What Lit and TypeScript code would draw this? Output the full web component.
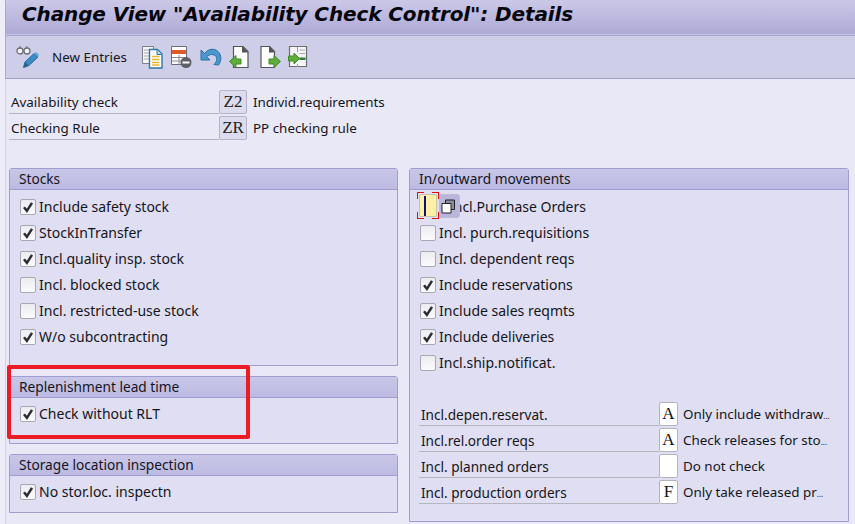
import { LitElement, html, css, svg } from "lit";
import { customElement } from "lit/decorators.js";

const check = (label: string, on: boolean, cls = "") => html`
  <div class="row">
    <span class="cb">${on ? html`<svg width="12" height="12" viewBox="0 0 12 12"><path d="M2 6.2 L4.900 9.800 L10 1.800" fill="none" stroke="#2c2c34" stroke-width="2.500"/></svg>` : ""}</span>
    <span class="lbl ${cls}">${label}</span>
  </div>`;

const dots = html`<span class="dots">...</span>`;

@customElement("app-root")
export class AppRoot extends LitElement {
  static styles = css`
    :host { display: block; width: 855px; height: 524px; overflow: hidden; position: relative; box-sizing: border-box; padding-left: 5px;
      font-family: "Noto Sans", "Open Sans", sans-serif; font-size: 13.4px; color: #15151c; background: #edecf8; }
    .title { height: 35px; box-sizing: border-box; padding: 0 0 7px 16px; display: flex; align-items: center;
      background: linear-gradient(#cbc8e7, #aeaad7); border-left: 1px solid #a9a7cd; border-bottom: 1px solid #c8c6e2;
      font: italic bold 20px "DejaVu Sans", sans-serif; letter-spacing: -0.12px; color: #06060c; white-space: nowrap; }
    .toolbar { height: 44px; box-sizing: border-box; background: #cfcee9; border-top: 1px solid #a9a6d0; border-bottom: 1px solid #a3a2c4;
      border-left: 1px solid #a9a7cd; display: flex; align-items: center; padding-left: 10px; }
    .toolbar svg { display: block; flex: none; }
    .ne { margin: 0 13px 0 11px; width: 77px; flex: none; white-space: nowrap; }
    .tools { display: flex; gap: 7px; align-items: center; }
    .main { border-left: 1px solid #d4d3e6; box-sizing: border-box; height: 445px; padding: 11px 6px 0 3px; background: #e9e8f6; }
    .head { display: flex; flex-direction: column; }
    .frow { display: flex; height: 26px; align-items: flex-start; }
    .flabel { width: 210px; height: 24px; box-sizing: border-box; padding-left: 2px; line-height: 25px; border-bottom: 1px solid #b5b5bd; flex: none; }
    .fbox { width: 28px; height: 24px; box-sizing: border-box; background: #dcdcee; border: 1px solid #b4b3c9; border-radius: 2px; flex: none;
      font: 17px/21px "Liberation Serif", serif; text-align: center; color: #222; }
    .fval { margin-left: 6px; line-height: 25px; }
    .cols { display: flex; gap: 11px; margin-top: 26px; align-items: flex-start; }
    .col { display: flex; flex-direction: column; gap: 10px; width: 389px; flex: none; }
    .col.r { width: 440px; }
    .grp { border: 1px solid #a09cd0; border-radius: 3px 3px 0 0; background: #dfdef2; box-sizing: border-box; }
    .gh { height: 21px; box-sizing: border-box; padding-left: 9px; font-size: 13.7px; line-height: 19px; border-bottom: 1px solid #a09cd0; background: linear-gradient(#c9c7e7, #bdbae2); }
    .gb { padding-top: 4px; position: relative; }
    .row { height: 26px; display: flex; align-items: center; padding-left: 10px; font-size: 14px; }
    .cb { width: 16px; height: 16px; box-sizing: border-box; border: 1px solid #a8a8b2; border-radius: 2px; background: linear-gradient(#ececf0, #fbfbfd); display: flex; align-items: center; justify-content: center; flex: none; }
    .lbl { margin: 0 0 2px 3px; }
    .lbl.shift { margin-left: 13px; }
    .s1 { height: 198px; } .s2 { height: 68px; } .s3 { height: 59px; }
    .s2 .gb, .s3 .gb { padding-top: 3px; }
    .sr { height: 354px; }
    .lower { margin-top: 26px; padding-left: 9px; }
    .lrow { display: flex; height: 26px; align-items: flex-start; }
    .llabel { width: 240px; height: 24px; box-sizing: border-box; padding-left: 2px; font-size: 13.6px; line-height: 25px; border-bottom: 1px solid #b5b5bd; flex: none; }
    .lbox { width: 19px; height: 24px; box-sizing: border-box; background: #fff; border: 1px solid #b4b4bc; border-radius: 2px; flex: none;
      font: 17px/22px "Liberation Serif", serif; text-align: center; color: #111; }
    .lval { margin-left: 5px; line-height: 25px; white-space: nowrap; }
    .dots { font-size: 8px; letter-spacing: 0; }
    .focus { position: absolute; left: 7px; top: 2px; width: 44px; height: 27px; }
    .fy { position: absolute; left: 2px; top: 2px; width: 18px; height: 23px; box-sizing: border-box; background: #fff0a4; border: 1px solid #c8c4a8; border-radius: 2px; }
    .caret { position: absolute; left: 4px; top: 1px; width: 2px; height: 20px; background: #101070; }
    .corner { position: absolute; width: 6px; height: 6px; border: 0 solid #e01010; }
    .c1 { left: 0; top: 0; border-width: 1px 0 0 1px; } .c2 { left: 15px; top: 0; border-width: 1px 1px 0 0; }
    .c3 { left: 0; top: 20px; border-width: 0 0 1px 1px; } .c4 { left: 15px; top: 20px; border-width: 0 1px 1px 0; }
    .fbtn { position: absolute; left: 22px; top: 2px; width: 21px; height: 24px; box-sizing: border-box; background: #b9b6dc; border-radius: 0 3px 3px 0; border: 1px solid #bdbcd4; display: flex; align-items: center; justify-content: flex-start; padding-left: 1px; }
    .mark { position: absolute; left: 7px; top: 365px; width: 243px; height: 74px; box-sizing: border-box; border: 4px solid #ed1c24; border-radius: 2px; }
  `;

  render() {
    return html`
      <div class="title">Change View "Availability Check Control": Details</div>
      <div class="toolbar">
        <svg width="25" height="25" viewBox="0 0 25 25">
          <circle cx="4" cy="6" r="3" fill="#f4f4f8" stroke="#6e6e78" stroke-width="1.300"/><circle cx="11" cy="6" r="3" fill="#f4f4f8" stroke="#6e6e78" stroke-width="1.300"/>
          <path d="M7 5.500h1M3 3.500L4.500 1M11.500 3L10 1" stroke="#6e6e78" fill="none"/>
          <path d="M7.500 22.500 L9 17 L18 8.500 L22 12 L13 20.500 Z" fill="#3a8cc4" stroke="#2a6f9e"/><path d="M7.500 22.500 L9 17 L12.500 20.800Z" fill="#2c5f88"/><path d="M18 8.500 L22 12 L23 10 L20 7Z" fill="#5aa6d8"/>
        </svg>
        <span class="ne">New Entries</span>
        <span class="tools">
          <svg width="22" height="23" viewBox="0 0 22 23">
            <path d="M.5 .5h11v17h-11z" fill="#f4f4f6" stroke="#7e7e88"/><path d="M2 4h7M2 7h7M2 10h7M2 13h7" stroke="#aaaab2"/>
            <path d="M7.500 3.500h8l4.500 4.500v14h-12.500z" fill="#fff" stroke="#2f78a6" stroke-width="1.400"/>
            <path d="M15 4v4.500h4.500" fill="#bcd4e4" stroke="#2f78a6"/>
            <path d="M10 10.500h7.500M10 13.500h7.500M10 16.500h7.500M10 19h7.500" stroke="#eeb52e" stroke-width="1.500"/>
          </svg>
          <svg width="22" height="23" viewBox="0 0 22 23">
            <path d="M.5 .5h15v18h-15z" fill="#fff" stroke="#6d6d75"/><rect x="1" y="4" width="14" height="4" fill="#dd5a2a"/>
            <path d="M1 11.500h14M1 15h14M8 9v9" stroke="#8a8a92"/>
            <circle cx="15" cy="16.500" r="5.500" fill="#5f5f66"/><rect x="11.500" y="15.500" width="7" height="2" fill="#fff"/>
          </svg>
          <svg width="22" height="20" viewBox="0 0 22 20">
            <path d="M1 3 L1 13 L10 13 L6.800 9.700 C9.500 6.800 14 6.800 16 9.500 C17.500 12 16.500 15 14 17.500 L18.500 18 C21.500 14 21.800 8 18 4.500 C14 1 8.500 1.500 4.500 6.500 Z" fill="#4a98cf" stroke="#2c70a2"/>
          </svg>
          <svg width="20" height="23" viewBox="0 0 20 23">
            <path d="M4.500 .5h9.500l5 5v16h-14.500z" fill="#fff" stroke="#55555e" stroke-width="1.200"/><path d="M13 0v6.500h6.500z" fill="#55555e"/>
            <path d="M7 13v-3.500l-6.500 6 6.500 6v-3.500h5v-5z" fill="#5fae3a" stroke="#3f8a26"/>
          </svg>
          <svg style="margin-left:4px" width="21" height="23" viewBox="0 0 21 23">
            <path d="M1 .5h8.500l5 5v16h-13.500z" fill="#fff" stroke="#55555e" stroke-width="1.200"/><path d="M9 0v6.500h6z" fill="#55555e"/>
            <path d="M14 13v-3.500l6.500 6-6.500 6v-3.500h-5v-5z" fill="#5fae3a" stroke="#3f8a26"/>
          </svg>
          <svg width="20" height="23" viewBox="0 0 20 23">
            <path d="M1.500 .5h17v20h-17z" fill="#f6f6f8" stroke="#6d6d75" stroke-width="1.200"/><path d="M9.500 1v5M9.500 18v3" stroke="#9a9aa2"/><path d="M11.500 4h5.500M11.500 7.500h5.500" stroke="#a8a8b0"/><rect x="11.500" y="11.500" width="6" height="2.500" fill="#2f7f3a"/>
            <path d="M6 10v-3l5.500 5.500-5.500 5.500v-3h-5.500v-5z" fill="#5fae3a" stroke="#3f8a26"/>
          </svg>
        </span>
      </div>
      <div class="main">
        <div class="head">
          <div class="frow"><div class="flabel">Availability check</div><div class="fbox">Z2</div><div class="fval">Individ.requirements</div></div>
          <div class="frow"><div class="flabel">Checking Rule</div><div class="fbox">ZR</div><div class="fval">PP checking rule</div></div>
        </div>
        <div class="cols">
          <div class="col">
            <section class="grp s1"><div class="gh">Stocks</div><div class="gb">
              ${check("Include safety stock", true)}${check("StockInTransfer", true)}${check("Incl.quality insp. stock", true)}
              ${check("Incl. blocked stock", false)}${check("Incl. restricted-use stock", false)}${check("W/o subcontracting", true)}
            </div></section>
            <section class="grp s2"><div class="gh">Replenishment lead time</div><div class="gb">${check("Check without RLT", true)}</div></section>
            <section class="grp s3"><div class="gh">Storage location inspection</div><div class="gb">${check("No stor.loc. inspectn", true)}</div></section>
          </div>
          <div class="col r">
            <section class="grp sr"><div class="gh">In/outward movements</div><div class="gb">
              ${check("Incl.Purchase Orders", false, "shift")}${check("Incl. purch.requisitions", false)}${check("Incl. dependent reqs", false)}
              ${check("Include reservations", true)}${check("Include sales reqmts", true)}${check("Include deliveries", true)}${check("Incl.ship.notificat.", false)}
              <div class="focus">
                <div class="fy"><div class="caret"></div></div>
                <i class="corner c1"></i><i class="corner c2"></i><i class="corner c3"></i><i class="corner c4"></i>
                <div class="fbtn"><svg width="15" height="15" viewBox="0 0 15 15"><path d="M4.500 1h9v9.500h-9z" fill="#8a8aa0" stroke="#222"/><path d="M1 4.500h9v9.500h-9z" fill="#fff" stroke="#222"/></svg></div>
              </div>
              <div class="lower">
                ${[["Incl.depen.reservat.","A",html`Only include withdraw${dots}`],["Incl.rel.order reqs","A",html`Check releases for sto${dots}`],["Incl. planned orders","","Do not check"],["Incl. production orders","F",html`Only take released pr${dots}`]].map(([a,b,c]) => html`
                  <div class="lrow"><div class="llabel">${a}</div><div class="lbox">${b}</div><div class="lval">${c}</div></div>`)}
              </div>
            </div></section>
          </div>
        </div>
      </div>
      <div class="mark"></div>
    `;
  }
}
